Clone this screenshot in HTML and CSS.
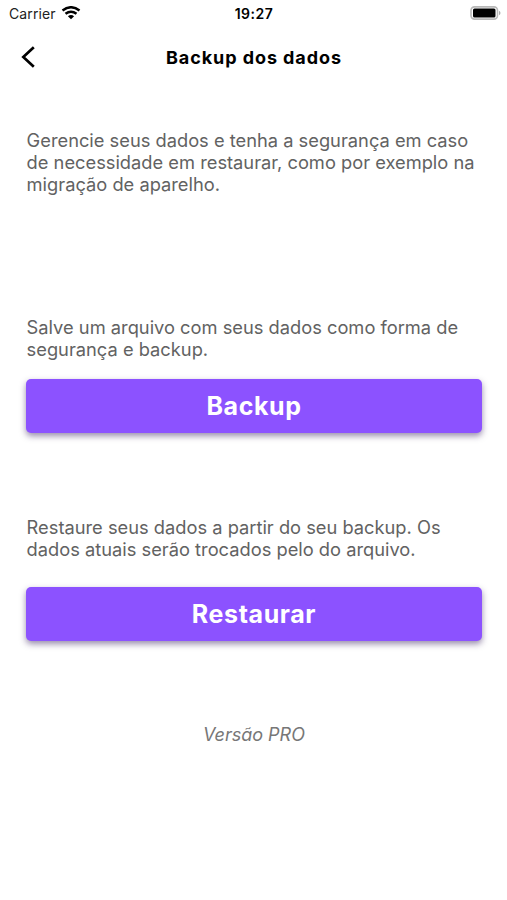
FILE: index.html
```html
<!DOCTYPE html>
<html lang="pt-BR">
<head>
<meta charset="utf-8">
<title>Backup dos dados</title>
<link rel="stylesheet" href="styles.css">
</head>
<body>
<div class="status">
  <div class="carrier"><span>Carrier</span>
    <svg class="wifi" width="20" height="14" viewBox="0 0 20 14"><path d="M1.5 4.5Q10-2 18.5 4.5M4.5 7.8Q10 3.6 15.5 7.8" fill="none" stroke="#000" stroke-width="2.5"/><path d="M6.9 10.3Q10 7.9 13.1 10.3L10 13.3Z"/></svg>
  </div>
  <time class="clock">19:27</time>
  <svg class="battery" width="31" height="14" viewBox="0 0 31 14"><rect x="1" y=".9" width="26.5" height="12.2" rx="3.5" fill="none" stroke="#b8b8b8" stroke-width="1.6"/><rect x="3" y="2.5" width="22.5" height="9" rx="1.5"/><path d="M29 4.8Q30.5 5.5 30.5 7T29 9.2Z" fill="#aaa"/></svg>
</div>
<header class="bar">
  <svg class="back" width="14" height="22" viewBox="0 0 14 22"><path d="M12.8 1.2L2.3 11L12.8 20.8" fill="none" stroke="#000" stroke-width="2.7"/></svg>
  <h1 class="title">Backup dos dados</h1>
</header>
<main class="content">
  <p class="text intro">Gerencie seus dados e tenha a segurança em caso<br>de necessidade em restaurar, como por exemplo na<br>migração de aparelho.</p>
  <p class="text save">Salve um arquivo com seus dados como forma de<br>segurança e backup.</p>
  <button class="action">Backup</button>
  <p class="text restore">Restaure seus dados a partir do seu backup. Os<br>dados atuais serão trocados pelo do arquivo.</p>
  <button class="action last">Restaurar</button>
  <p class="version">Versão PRO</p>
</main>
</body>
</html>
```
FILE: styles.css
```css
* { box-sizing: border-box; }
body { margin: 0; background: #fff; font-family: Inter, sans-serif; height: 900px; overflow: hidden; }
.status { height: 28px; display: grid; grid-template-columns: 1fr auto 1fr; align-items: center; padding: 0 6px 0 9px; font-size: 14px; line-height: 28px; }
.carrier { display: flex; align-items: center; gap: 5px; color: #222; letter-spacing: .1px; }
.wifi { margin-top: -2px; }
.clock { font-weight: 600; letter-spacing: .5px; margin-left: -2px; }
.battery { justify-self: end; margin-top: -2px; }
.bar { height: 58px; display: grid; grid-template-columns: 22px 1fr 22px; align-items: center; padding: 0 21px; }
.title { margin: 0; padding-left: 1px; text-align: center; font-size: 18px; font-weight: 700; letter-spacing: .92px; }
.content { padding: 43px 26px 0; }
.text { margin: 0; padding-left: .6px; color: #626262; font-size: 18.3px; line-height: 22px; white-space: nowrap; }
.save { margin-top: 121px; }
.action { display: block; width: 456px; height: 54px; margin: 19px 0 0; padding: 0; border: 0; border-radius: 5px; background: #8c52ff; color: #fff; font: 700 25px Inter, sans-serif; letter-spacing: .6px; box-shadow: 0 3px 6px rgba(50,25,90,.5); }
.restore { margin-top: 83px; }
.last { height: 53.5px; margin-top: 27px; }
.version { margin: 82.5px 0 0; padding-left: 1px; text-align: center; font-size: 18px; line-height: 24px; font-style: italic; color: #777; }
```
